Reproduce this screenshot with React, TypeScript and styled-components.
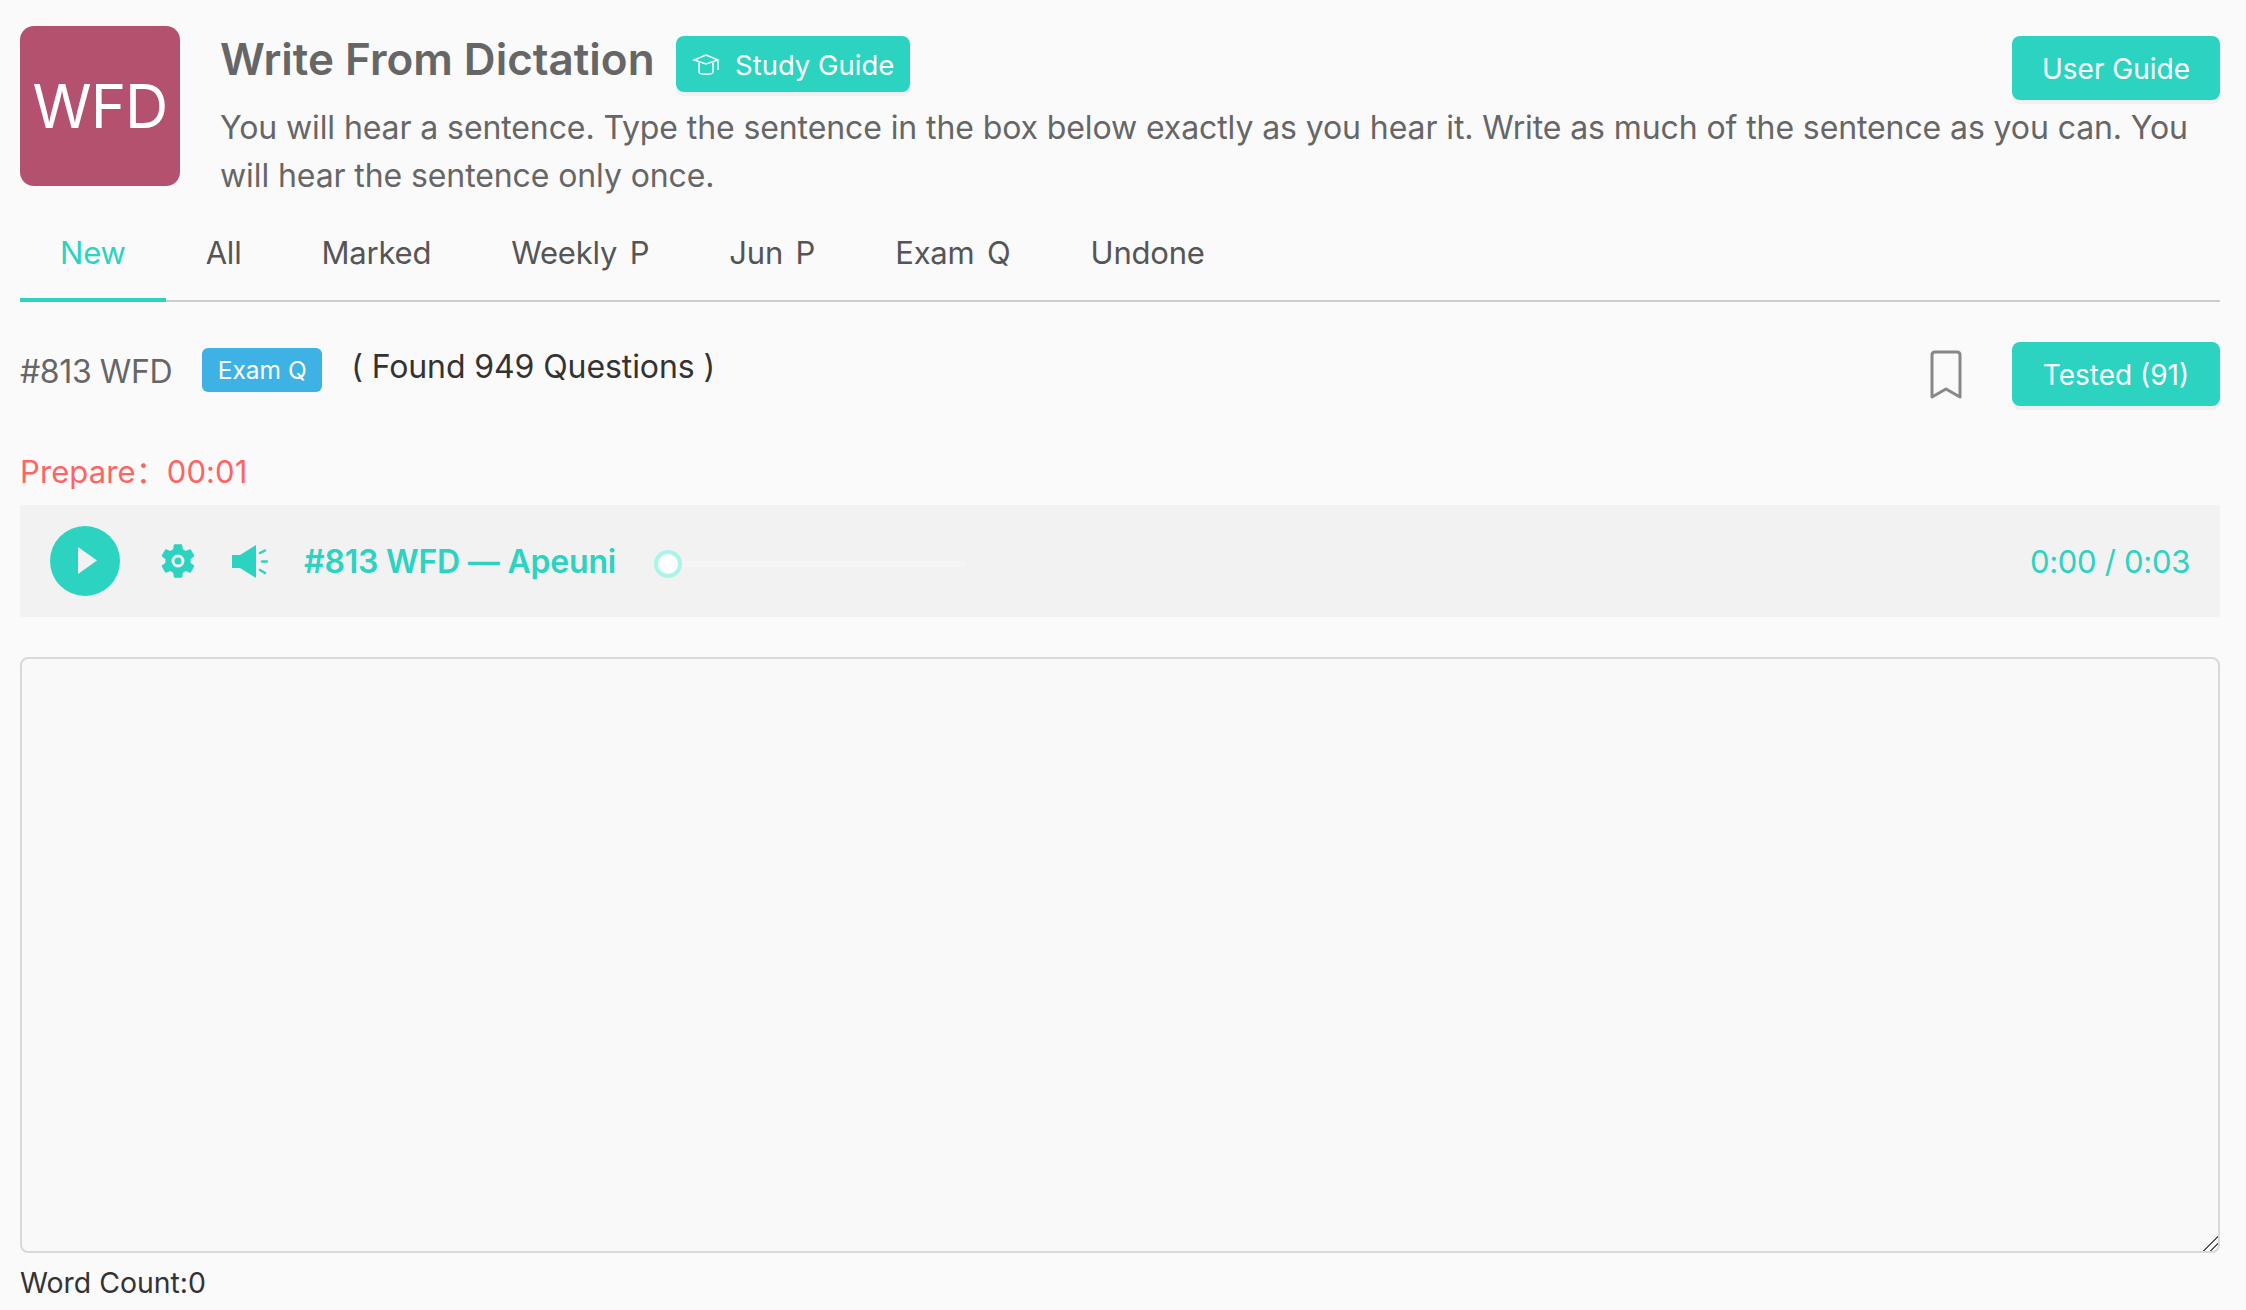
import React from 'react';
import styled, { createGlobalStyle } from 'styled-components';

const TEAL = '#2bd3c0';
const FONT = 'Inter, "Liberation Sans", "Noto Sans CJK SC", sans-serif';

const GlobalStyle = createGlobalStyle`
  html, body { margin: 0; padding: 0; background: #fafafa; }
  * { box-sizing: border-box; }
`;

const Page = styled.div`
  height: 1310px;
  overflow: hidden;
  padding: 26px 26px 0 20px;
  font-family: ${FONT};
  color: #666;
`;

const Header = styled.header`
  display: flex;
  gap: 40px;
`;

const Avatar = styled.div`
  flex: none;
  width: 160px;
  height: 160px;
  border-radius: 14px;
  background: #b4516f;
  color: #fff;
  font-size: 60px;
  letter-spacing: -1px;
  display: flex;
  align-items: center;
  justify-content: center;
`;

const HeaderBody = styled.div`
  flex: 1;
  min-width: 0;
`;

const TitleRow = styled.div`
  display: flex;
  align-items: flex-start;
  height: 78px;
`;

const Title = styled.h1`
  margin: 0 21px 0 0;
  width: 435px;
  white-space: nowrap;
  font-size: 44px;
  line-height: 66px;
  font-weight: 600;
  color: #666;
`;

const StudyButton = styled.button`
  margin-top: 10px;
  height: 56px;
  width: 234px;
  border: 0;
  border-radius: 8px;
  background: ${TEAL};
  box-shadow: 0 4px 0 #f0f0f0;
  color: #fff;
  font: 27.5px ${FONT};
  display: flex;
  align-items: center;
  gap: 15px;
  padding: 2px 0 0 16px;
`;

const PrimaryButton = styled.button`
  width: 208px;
  height: 64px;
  flex: none;
  border: 0;
  border-radius: 8px;
  background: ${TEAL};
  box-shadow: 0 4px 0 #f0f0f0;
  color: #fff;
  font: 28px ${FONT};
  padding: 2px 0 0;
  margin-left: auto;
`;

const GuideButton = styled(PrimaryButton)`
  margin-top: 10px;
`;

const Description = styled.p`
  margin: 0;
  font-size: 32px;
  line-height: 48px;
  letter-spacing: -0.1px;
  color: #666;
`;

const Tabs = styled.nav`
  display: flex;
  height: 84px;
  margin-top: 18px;
  border-bottom: 2px solid #ccc;
`;

const Tab = styled.div<{ $active?: boolean }>`
  padding: 0 40px;
  height: 84px;
  line-height: 70px;
  font-size: 31px;
  letter-spacing: -0.2px;
  word-spacing: 4px;
  color: ${(p) => (p.$active ? TEAL : '#555')};
  border-bottom: ${(p) => (p.$active ? `4px solid ${TEAL}` : '0')};
`;

const InfoRow = styled.div`
  display: flex;
  align-items: flex-start;
  margin-top: 40px;
  height: 64px;
`;

const QuestionId = styled.span`
  font-size: 32px;
  letter-spacing: -0.4px;
  line-height: 60px;
  color: #666;
  margin-right: 30px;
`;

const Badge = styled.span`
  margin-top: 6px;
  width: 120px;
  height: 44px;
  border-radius: 6px;
  background: #3eb1e5;
  color: #fff;
  font-size: 24.5px;
  line-height: 44px;
  text-align: center;
  margin-right: 29px;
`;

const Found = styled.span`
  font-size: 32px;
  letter-spacing: -0.1px;
  line-height: 50px;
  color: #333;
`;

const BookmarkIcon = styled.svg`
  margin: 8px 0 0 auto;
  width: 32px;
  height: 50px;
`;

const TestedButton = styled(PrimaryButton)`
  margin-left: 50px;
`;

const Prepare = styled.div`
  margin-top: 42px;
  font-size: 31px;
  letter-spacing: 0.1px;
  line-height: 48px;
  color: #ff6464;
  white-space: pre;
`;

const Player = styled.div`
  margin-top: 9px;
  height: 112px;
  background: #f2f2f2;
  display: flex;
  align-items: center;
  padding: 0 30px;
  color: ${TEAL};
`;

const PlayCircle = styled.div`
  width: 70px;
  height: 70px;
  border-radius: 50%;
  background: ${TEAL};
  display: flex;
  align-items: center;
  justify-content: center;
  padding-left: 5px;
  margin-right: 37px;
`;

const GearIcon = styled.svg`
  width: 42px;
  height: 42px;
  margin-right: 33px;
`;

const SpeakerIcon = styled.svg`
  width: 36px;
  height: 33px;
  margin-right: 36px;
`;

const TrackTitle = styled.span`
  font-size: 32px;
  font-weight: 600;
  letter-spacing: -0.2px;
  margin-right: 38px;
`;

const Slider = styled.div`
  position: relative;
  width: 312px;
  height: 6px;
  margin-top: 6px;
  border-radius: 3px;
  background: #f5f5f5;
`;

const Thumb = styled.div`
  position: absolute;
  left: 0;
  top: -11px;
  width: 28px;
  height: 28px;
  border-radius: 50%;
  background: #fff;
  border: 4px solid #aaf5e8;
`;

const TimeText = styled.span`
  margin-left: auto;
  font-size: 31px;
  letter-spacing: -0.3px;
`;

const Answer = styled.textarea`
  display: block;
  width: 100%;
  height: 596px;
  margin-top: 40px;
  border: 2px solid #d9d9d9;
  border-radius: 8px;
  background: #f9f9f9;
  outline: none;
  resize: vertical;

  &::-webkit-resizer {
    background: linear-gradient(
      135deg,
      transparent 48%,
      #555 48%,
      #555 56%,
      transparent 56%,
      transparent 72%,
      #555 72%,
      #555 80%,
      transparent 80%
    );
  }
`;

const WordCount = styled.div`
  margin-top: 12px;
  font-size: 28.4px;
  line-height: 36px;
  color: #333;
`;

const TABS = ['New', 'All', 'Marked', 'Weekly P', 'Jun P', 'Exam Q', 'Undone'];

const App: React.FC = () => (
  <Page>
    <GlobalStyle />
    <Header>
      <Avatar>WFD</Avatar>
      <HeaderBody>
        <TitleRow>
          <Title>Write From Dictation</Title>
          <StudyButton>
            <svg width="28" height="24" viewBox="0 0 28 24" fill="none" stroke="#fff" strokeWidth="1.5">
              <path d="M14 2 L26 7 L14 11 L2 7 Z" />
              <path d="M7 9.5 V19 C7 22 21 22 21 19 V9.5" />
              <path d="M26 8 V17" />
            </svg>
            Study Guide
          </StudyButton>
          <GuideButton>User Guide</GuideButton>
        </TitleRow>
        <Description>
          You will hear a sentence. Type the sentence in the box below exactly as you hear it. Write as much of the
          sentence as you can. You will hear the sentence only once.
        </Description>
      </HeaderBody>
    </Header>
    <Tabs>
      {TABS.map((t, i) => (
        <Tab key={t} $active={i === 0}>
          {t}
        </Tab>
      ))}
    </Tabs>
    <InfoRow>
      <QuestionId>#813 WFD</QuestionId>
      <Badge>Exam Q</Badge>
      <Found>( Found 949 Questions )</Found>
      <BookmarkIcon viewBox="0 0 32 50" fill="none" stroke="#888" strokeWidth="3">
        <path d="M2 47 V5 Q2 2 5 2 H27 Q30 2 30 5 V47 L16 39 Z" strokeLinejoin="round" />
      </BookmarkIcon>
      <TestedButton>Tested (91)</TestedButton>
    </InfoRow>
    <Prepare>{'Prepare：00:01'}</Prepare>
    <Player>
      <PlayCircle>
        <svg width="20" height="28" viewBox="0 0 20 28">
          <path d="M0 0 L19 13.5 L0 27 Z" fill="#f2f2f2" />
        </svg>
      </PlayCircle>
      <GearIcon viewBox="0 0 24 24">
        <path
          fill={TEAL}
          d="M19.14 12.94c.04-.3.06-.61.06-.94 0-.32-.02-.64-.07-.94l2.03-1.58c.18-.14.23-.41.12-.61l-1.92-3.32c-.12-.22-.37-.29-.59-.22l-2.39.96c-.5-.38-1.03-.7-1.62-.94l-.36-2.54c-.04-.24-.24-.41-.48-.41h-3.84c-.24 0-.43.17-.47.41l-.36 2.54c-.59.24-1.13.57-1.62.94l-2.39-.96c-.22-.08-.47 0-.59.22L2.74 8.87c-.12.21-.08.47.12.61l2.03 1.58c-.05.3-.09.63-.09.94s.02.64.07.94l-2.03 1.58c-.18.14-.23.41-.12.61l1.92 3.32c.12.22.37.29.59.22l2.39-.96c.5.38 1.03.7 1.62.94l.36 2.54c.05.24.24.41.48.41h3.84c.24 0 .44-.17.47-.41l.36-2.54c.59-.24 1.13-.56 1.62-.94l2.39.96c.22.08.47 0 .59-.22l1.92-3.32c.12-.22.07-.47-.12-.61l-2.01-1.58z"
        />
        <circle cx="12" cy="12" r="3.7" fill="#f2f2f2" />
        <circle cx="12" cy="12" r="2" fill={TEAL} />
      </GearIcon>
      <SpeakerIcon viewBox="0 0 36 33">
        <path d="M0 10 H8 L24 0 V33 L8 23 H0 Z" fill={TEAL} />
        <path d="M28 8 L33 5.5 M30 16.5 H35 M28 25 L33 28" stroke={TEAL} strokeWidth="2.5" strokeLinecap="round" />
      </SpeakerIcon>
      <TrackTitle>#813 WFD — Apeuni</TrackTitle>
      <Slider>
        <Thumb />
      </Slider>
      <TimeText>0:00 / 0:03</TimeText>
    </Player>
    <Answer />
    <WordCount>Word Count:0</WordCount>
  </Page>
);

export default App;
